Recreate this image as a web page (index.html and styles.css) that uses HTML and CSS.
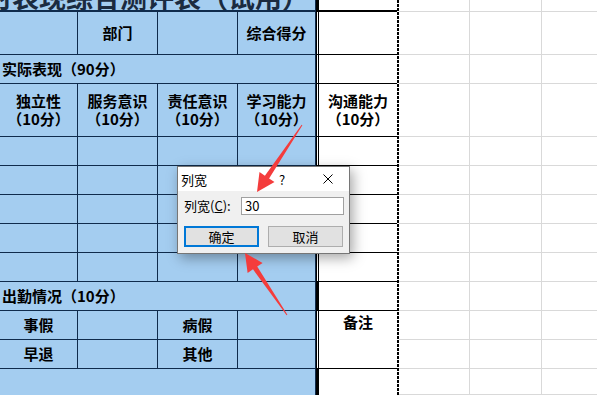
FILE: index.html
```html
<!DOCTYPE html>
<html lang="zh-CN">
<head>
    <meta charset="UTF-8">
    <title>测评表 - 列宽</title>
    <link rel="stylesheet" href="styles.css">
</head>
<body>
<div class="page">
    <!-- 表格区域 -->
    <div class="sheet">
        <div class="row h-title">
            <div class="cell blue wide title"><span class="title-text">平时表现综合测评表（试用）</span></div>
            <div class="cell side solid top"></div>
            <div class="cell grid first"></div><div class="cell grid"></div><div class="cell grid"></div>
        </div>
        <div class="row h-head">
            <div class="cell blue c1"></div>
            <div class="cell blue c2">部门</div>
            <div class="cell blue c3"></div>
            <div class="cell blue c4">综合得分</div>
            <div class="cell side"></div>
            <div class="cell grid first"></div><div class="cell grid"></div><div class="cell grid"></div>
        </div>
        <div class="row h-std">
            <div class="cell blue wide">实际表现（90分）</div>
            <div class="cell side"></div>
            <div class="cell grid first"></div><div class="cell grid"></div><div class="cell grid"></div>
        </div>
        <div class="row h-tall">
            <div class="cell blue c1">独立性<br>（10分）</div>
            <div class="cell blue c2">服务意识<br>（10分）</div>
            <div class="cell blue c3">责任意识<br>（10分）</div>
            <div class="cell blue c4">学习能力<br>（10分）</div>
            <div class="cell side">沟通能力<br>（10分）</div>
            <div class="cell grid first"></div><div class="cell grid"></div><div class="cell grid"></div>
        </div>
        <div class="row h-std">
            <div class="cell blue c1"></div><div class="cell blue c2"></div><div class="cell blue c3"></div><div class="cell blue c4"></div>
            <div class="cell side"></div>
            <div class="cell grid first"></div><div class="cell grid"></div><div class="cell grid"></div>
        </div>
        <div class="row h-std">
            <div class="cell blue c1"></div><div class="cell blue c2"></div><div class="cell blue c3"></div><div class="cell blue c4"></div>
            <div class="cell side"></div>
            <div class="cell grid first"></div><div class="cell grid"></div><div class="cell grid"></div>
        </div>
        <div class="row h-std">
            <div class="cell blue c1"></div><div class="cell blue c2"></div><div class="cell blue c3"></div><div class="cell blue c4"></div>
            <div class="cell side"></div>
            <div class="cell grid first"></div><div class="cell grid"></div><div class="cell grid"></div>
        </div>
        <div class="row h-std">
            <div class="cell blue c1"></div><div class="cell blue c2"></div><div class="cell blue c3"></div><div class="cell blue c4"></div>
            <div class="cell side"></div>
            <div class="cell grid first"></div><div class="cell grid"></div><div class="cell grid"></div>
        </div>
        <div class="row h-std">
            <div class="cell blue c1"></div><div class="cell blue c2"></div><div class="cell blue c3"></div><div class="cell blue c4"></div>
            <div class="cell side"></div>
            <div class="cell grid first"></div><div class="cell grid"></div><div class="cell grid"></div>
        </div>
        <div class="row h-std">
            <div class="cell blue wide">出勤情况（10分）</div>
            <div class="cell side solid"></div>
            <div class="cell grid first"></div><div class="cell grid"></div><div class="cell grid"></div>
        </div>
        <div class="row h-std">
            <div class="cell blue c1">事假</div>
            <div class="cell blue c2"></div>
            <div class="cell blue c3">病假</div>
            <div class="cell blue c4"></div>
            <div class="cell side open">备注</div>
            <div class="cell grid first"></div><div class="cell grid"></div><div class="cell grid"></div>
        </div>
        <div class="row h-std">
            <div class="cell blue c1">早退</div>
            <div class="cell blue c2"></div>
            <div class="cell blue c3">其他</div>
            <div class="cell blue c4"></div>
            <div class="cell side"></div>
            <div class="cell grid first"></div><div class="cell grid"></div><div class="cell grid"></div>
        </div>
        <div class="row h-rest">
            <div class="cell blue wide end"></div>
            <div class="cell side solid end"></div>
            <div class="cell grid first"></div><div class="cell grid"></div><div class="cell grid"></div>
        </div>
    </div>

    <!-- 列宽对话框 -->
    <div class="dialog">
        <div class="dlg-bar">
            <span class="dlg-title">列宽</span>
            <span class="dlg-help">?</span>
            <svg class="dlg-close" width="10" height="10" viewBox="0 0 10 10">
                <path d="M0.5 0.5 L9.5 9.5 M9.5 0.5 L0.5 9.5" stroke="#000" stroke-width="1" fill="none"/>
            </svg>
        </div>
        <div class="dlg-body">
            <div class="dlg-row">
                <label class="dlg-label" for="col_width">列宽(<span class="key">C</span>):</label>
                <div class="dlg-input" id="col_width">30</div>
            </div>
            <div class="dlg-row buttons">
                <div class="btn primary">确定</div>
                <div class="btn">取消</div>
            </div>
        </div>
    </div>

    <!-- 标注箭头 -->
    <svg class="marks" width="597" height="395" viewBox="0 0 597 395">
        <polygon points="302.4,125.3 269.1,178.5 274.5,182.1 257,192 259.5,172.1 264.9,175.7 301.6,124.7" fill="#f43c3c"/>
        <polygon points="287.4,314.7 257.2,266.5 262.6,262.9 245,253 247.6,273 253,269.3 286.6,315.3" fill="#f43c3c"/>
    </svg>
</div>
</body>
</html>
```

FILE: styles.css
```css
/* 页面 */
body {
    margin: 0;
    background: #fff;
    font-family: "Noto Sans CJK SC", sans-serif;
}

.page {
    position: relative;
    width: 597px;
    height: 395px;
    overflow: hidden;
}

/* 表格 */
.sheet {
    display: flex;
    flex-direction: column;
    height: 100%;
    background-color: #fff;
    /* 分页虚线 */
    background-image: repeating-linear-gradient(to bottom, #000 0 3px, #fff 3px 4px);
    background-position: 397px 0;
    background-size: 2px 100%;
    background-repeat: no-repeat;
}

.row {
    display: flex;
    flex: none;
}

.h-title { height: 12px; }
.h-head  { height: 43px; }
.h-std   { height: 29px; }
.h-tall  { height: 53px; }
.h-rest  { flex: 1; }

.cell {
    box-sizing: border-box;
    flex: none;
    display: flex;
    align-items: center;
    justify-content: center;
    text-align: center;
    font-size: 15px;
    font-weight: bold;
    line-height: 18px;
    color: #000;
}

/* 蓝色区域 */
.blue {
    background: #a4cdf0;
    border-right: 1px solid #0f2b4c;
    border-bottom: 1px solid #0f2b4c;
}

.c1 { width: 78px; }
.c2 { width: 80px; }
.c3 { width: 80px; }
.c4 { width: 78px; }

.wide {
    width: 316px;
    justify-content: flex-start;
    padding-left: 2px;
}

.blue.end { border-bottom: none; }

/* 标题（被截断） */
.title {
    overflow: hidden;
    align-items: flex-start;
    padding-left: 0;
    border-bottom-width: 2px;
}

.title-text {
    flex: none;
    font-size: 27px;
    line-height: 27px;
    margin-top: -17px;
    margin-left: -42px;
    white-space: nowrap;
    color: #1b2b40;
}

/* 白色列 */
.side {
    width: 81px;
    border-left: 3px double #000;
    border-bottom: 1px solid #000;
}

.side.solid { border-left-style: solid; }
.side.top { border-bottom-width: 2px; }
.side.end { border-bottom: none; }

.side.open {
    border-bottom: none;
    align-items: flex-start;
    padding-top: 2px;
}

/* 普通网格 */
.grid {
    width: 72px;
    border-right: 1px solid #d9d9d9;
    border-bottom: 1px solid #d9d9d9;
}

.grid.first {
    width: 71px;
    margin-left: 2px;
}

/* 对话框 */
.dialog {
    position: absolute;
    left: 177px;
    top: 166px;
    width: 173px;
    box-sizing: border-box;
    border: 1px solid #767676;
    background: #f0f0f0;
    box-shadow: 3px 4px 12px rgba(0, 0, 0, 0.35);
    font-size: 13px;
    color: #000;
    display: flex;
    flex-direction: column;
}

.dlg-bar {
    height: 24px;
    background: #fff;
    display: flex;
    align-items: center;
    padding-left: 3px;
}

.dlg-help {
    margin-left: auto;
    width: 10px;
}

.dlg-close {
    margin-left: 34px;
    margin-right: 16px;
}

.dlg-body {
    padding: 6px 5px 6px 6px;
}

.dlg-row {
    display: flex;
    align-items: center;
}

.dlg-label {
    width: 57px;
    line-height: 18px;
}

.key { text-decoration: underline; }

.dlg-input {
    box-sizing: border-box;
    width: 103px;
    height: 18px;
    border: 1px solid #a0a0a0;
    background: #fff;
    padding-left: 3px;
    line-height: 16px;
}

.buttons {
    margin-top: 11px;
    gap: 9px;
}

.btn {
    box-sizing: border-box;
    width: 75px;
    height: 21px;
    border: 1px solid #adadad;
    background: #e1e1e1;
    display: flex;
    align-items: center;
    justify-content: center;
}

.btn.primary {
    border: 2px solid #0078d7;
}

/* 箭头 */
.marks {
    position: absolute;
    left: 0;
    top: 0;
    pointer-events: none;
}
```
